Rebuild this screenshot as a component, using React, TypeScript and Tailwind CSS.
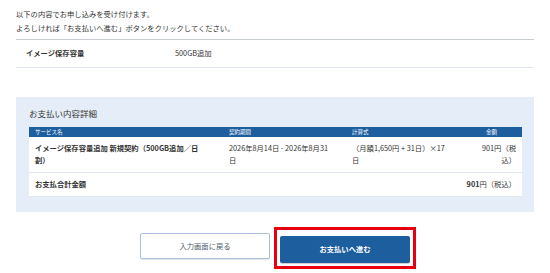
import React from "react";

const rows = [
  {
    service: "イメージ保存容量追加 新規契約（500GB追加／日割）",
    period: "2026年8月14日 - 2026年8月31日",
    formula: "（月額1,650円 + 31日）×17日",
    amount: "901円（税込）",
  },
];

export default function App() {
  return (
    <div
      className="w-[550px] h-[273px] overflow-hidden bg-white px-4 text-[#333]"
      style={{ fontFamily: '"Noto Sans CJK JP", "Noto Sans", sans-serif' }}
    >
      {/* Intro */}
      <div className="pt-[7px] text-[7.3px] leading-[14px]">
        <p>以下の内容でお申し込みを受け付けます。</p>
        <p>よろしければ「お支払いへ進む」ボタンをクリックしてください。</p>
      </div>

      {/* Summary row */}
      <div className="mt-[4px] flex h-[29px] items-center border-t border-b border-t-[#c8cdd3] border-b-[#e1e7ee] pl-[10px] text-[7.3px]">
        <span className="w-[149px] font-bold">イメージ保存容量</span>
        <span>500GB追加</span>
      </div>

      {/* Payment detail panel */}
      <div className="mt-[29px] bg-[#e5eef8] pt-[10px] pb-[15px] pl-[13px] pr-[12px]">
        <h2 className="mb-[7px] text-[8.5px] leading-[13px] text-[#333]">お支払い内容詳細</h2>

        <table className="w-full table-fixed border-collapse bg-white text-[7.3px]">
          <colgroup>
            <col className="w-[194px]" />
            <col className="w-[123px]" />
            <col className="w-[115px]" />
            <col />
          </colgroup>
          <thead>
            <tr className="h-[10px] bg-[#1d5e9f] text-[5.5px] leading-[10px] text-white">
              <th className="px-[6px] text-left font-normal">サービス名</th>
              <th className="px-[6px] text-left font-normal">契約期間</th>
              <th className="px-[6px] text-left font-normal">計算式</th>
              <th className="px-[6px] text-center font-normal">金額</th>
            </tr>
          </thead>
          <tbody>
            {rows.map((r, i) => (
              <tr key={i} className="border-b border-[#e1e8f0] align-top leading-[12px]">
                <td className="px-[6px] pt-[5px] pb-[6px] font-bold">
                  イメージ保存容量追加 新規契約（500GB追加／日
                  <br />
                  割）
                </td>
                <td className="px-[6px] pt-[5px] pb-[6px]">
                  2026年8月14日 - 2026年8月31
                  <br />日
                </td>
                <td className="px-[6px] pt-[5px] pb-[6px]">
                  （月額1,650円 + 31日）×17
                  <br />日
                </td>
                <td className="px-[6px] pt-[5px] pb-[6px] text-right">
                  901円（税
                  <br />
                  込）
                </td>
              </tr>
            ))}
            <tr className="h-[24px] border-b border-[#e1e8f0]">
              <td className="px-[6px] font-bold" colSpan={2}>
                お支払合計金額
              </td>
              <td className="px-[6px] text-right" colSpan={2}>
                <span className="font-bold">901</span>円（税込）
              </td>
            </tr>
          </tbody>
        </table>
      </div>

      {/* Buttons */}
      <div className="mt-[21px] flex justify-center gap-[10px]">
        <button className="h-[26px] w-[130px] rounded-[2px] border border-[#a9c1dd] bg-white text-[7.3px] text-[#4d5b6b] shadow-[0_1px_1px_rgba(0,0,0,0.12)]">
          入力画面に戻る
        </button>
        <div className="relative">
          <button className="h-[27px] w-[130px] rounded-[2px] bg-[#1d5e9f] text-[7.3px] font-bold text-white shadow-[0_1px_1px_rgba(0,0,0,0.2)]">
            お支払いへ進む
          </button>
          <span className="pointer-events-none absolute -inset-[6px] border-[3px] border-[#e60012]" />
        </div>
      </div>
    </div>
  );
}
